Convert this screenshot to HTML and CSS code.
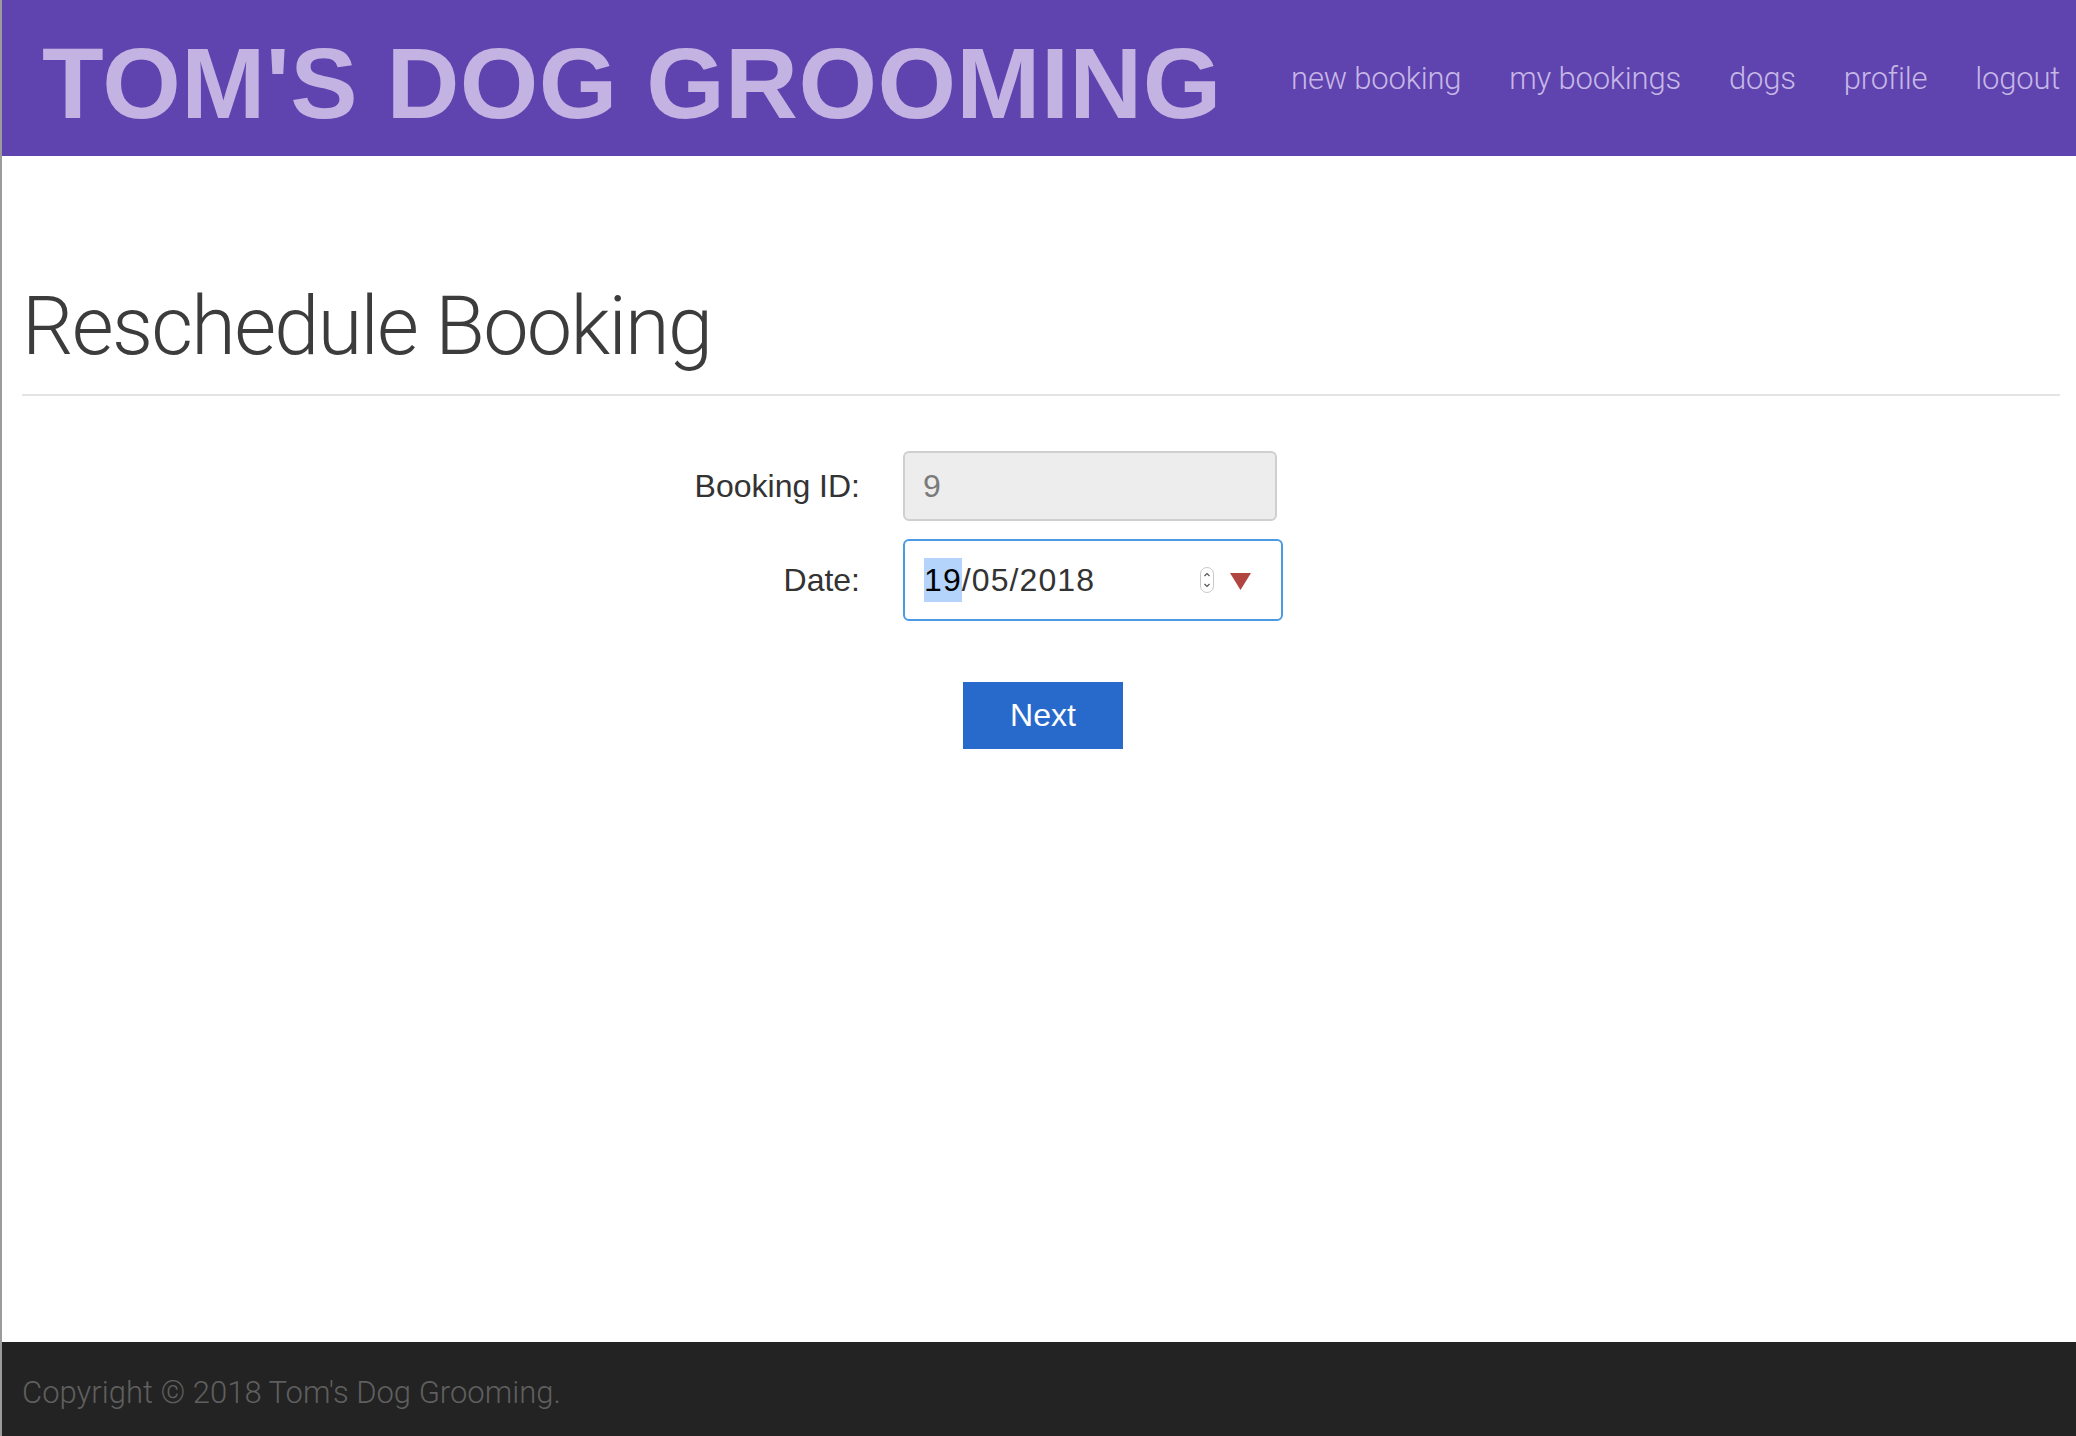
FILE: index.html
```html
<!DOCTYPE html>
<html lang="en">
<head>
<meta charset="utf-8">
<title>Reschedule Booking - Tom's Dog Grooming</title>
<link rel="stylesheet" href="styles.css">
</head>
<body>
<header class="site-header">
  <div class="brand">TOM'S DOG GROOMING</div>
  <nav class="nav">
    <a href="#">new booking</a>
    <a href="#">my bookings</a>
    <a href="#">dogs</a>
    <a href="#">profile</a>
    <a href="#">logout</a>
  </nav>
</header>
<main class="content">
  <div class="page-header">
    <h1>Reschedule Booking</h1>
  </div>
  <form class="form">
    <div class="row">
      <label class="label">Booking ID:</label>
      <div class="field field-disabled">9</div>
    </div>
    <div class="row">
      <label class="label">Date:</label>
      <div class="field field-date">
        <span class="date-text"><span class="sel">19</span>/05/2018</span>
        <span class="spinner">
          <svg width="14" height="26" viewBox="0 0 14 26">
            <rect x="0.5" y="0.5" width="13" height="25" rx="6.5" fill="#fff" stroke="#c8c8c8"/>
            <path d="M4.5 9 L7 6.5 L9.5 9" fill="none" stroke="#555" stroke-width="1.2"/>
            <path d="M4.5 17 L7 19.5 L9.5 17" fill="none" stroke="#555" stroke-width="1.2"/>
          </svg>
        </span>
        <span class="caret">
          <svg width="21" height="17" viewBox="0 0 21 17"><polygon points="0,0 21,0 10.5,17" fill="#b0463f"/></svg>
        </span>
      </div>
    </div>
    <div class="actions">
      <button type="button" class="btn">Next</button>
    </div>
  </form>
</main>
<footer class="site-footer">
  <p>Copyright © 2018 Tom's Dog Grooming.</p>
</footer>
</body>
</html>
```
FILE: styles.css
```css
* { box-sizing: border-box; }
html, body { height: 100%; }
body {
  margin: 0;
  min-height: 100vh;
  display: flex;
  flex-direction: column;
  border-left: 2px solid #9b9b9b;
  font-family: "Liberation Sans", Arial, sans-serif;
  background: #fff;
}
.site-header {
  height: 156px;
  background: #5f43ae;
  display: flex;
  align-items: center;
  justify-content: space-between;
  padding: 0 16px 0 40px;
}
.brand {
  font-family: "Liberation Sans", Arial, sans-serif;
  font-weight: 700;
  font-size: 101px;
  line-height: 1;
  letter-spacing: 0.4px;
  color: #c2b3e3;
  margin-top: 11px;
  white-space: nowrap;
}
.nav {
  display: flex;
  gap: 48px;
}
.nav a {
  font-family: "Roboto", "Liberation Sans", sans-serif;
  font-weight: 300;
  font-size: 31px;
  line-height: 1;
  letter-spacing: -0.2px;
  color: #c6b7e7;
  text-decoration: none;
}
.content {
  padding: 0 16px 0 20px;
}
.page-header {
  margin-top: 126px;
  padding-bottom: 23px;
  border-bottom: 2px solid #e4e4e4;
}
.page-header h1 {
  margin: 0;
  font-family: "Roboto", "Liberation Sans", sans-serif;
  font-weight: 300;
  font-size: 81px;
  line-height: 89px;
  letter-spacing: -1.7px;
  color: #3c3c3c;
}
.form {
  margin-top: 55px;
}
.row {
  display: grid;
  grid-template-columns: 838px 380px;
  column-gap: 43px;
  align-items: center;
  margin-bottom: 18px;
}
.label {
  text-align: right;
  font-size: 32px;
  color: #333;
}
.field {
  font-size: 32px;
  border-radius: 6px;
  display: flex;
  align-items: center;
}
.field-disabled {
  width: 374px;
  height: 70px;
  background: #ededed;
  border: 2px solid #cfcfcf;
  color: #7a7a7a;
  padding-left: 18px;
}
.field-date {
  width: 380px;
  height: 82px;
  border: 2px solid #4a9be3;
  color: #333;
  padding-left: 19px;
}
.date-text { flex: 1; letter-spacing: 1.1px; }
.sel {
  background: #b4d4fb;
  color: #000;
  padding: 4px 0;
}
.spinner {
  display: flex;
  margin-right: 16px;
}
.caret {
  display: flex;
  margin-right: 30px;
  margin-top: 2px;
}
.actions {
  display: flex;
  justify-content: center;
  margin-top: 61px;
  padding-left: 4px;
}
.btn {
  width: 160px;
  height: 67px;
  border: none;
  border-radius: 0;
  background: #286acb;
  color: #fff;
  font-family: "Liberation Sans", Arial, sans-serif;
  font-size: 32px;
  cursor: pointer;
}
.site-footer {
  margin-top: auto;
  height: 94px;
  background: #232323;
  padding: 0 20px;
  display: flex;
  align-items: center;
}
.site-footer p {
  margin: 6px 0 0;
  font-family: "Roboto", "Liberation Sans", sans-serif;
  font-weight: 300;
  font-size: 31px;
  color: #5f5f5f;
}
```
